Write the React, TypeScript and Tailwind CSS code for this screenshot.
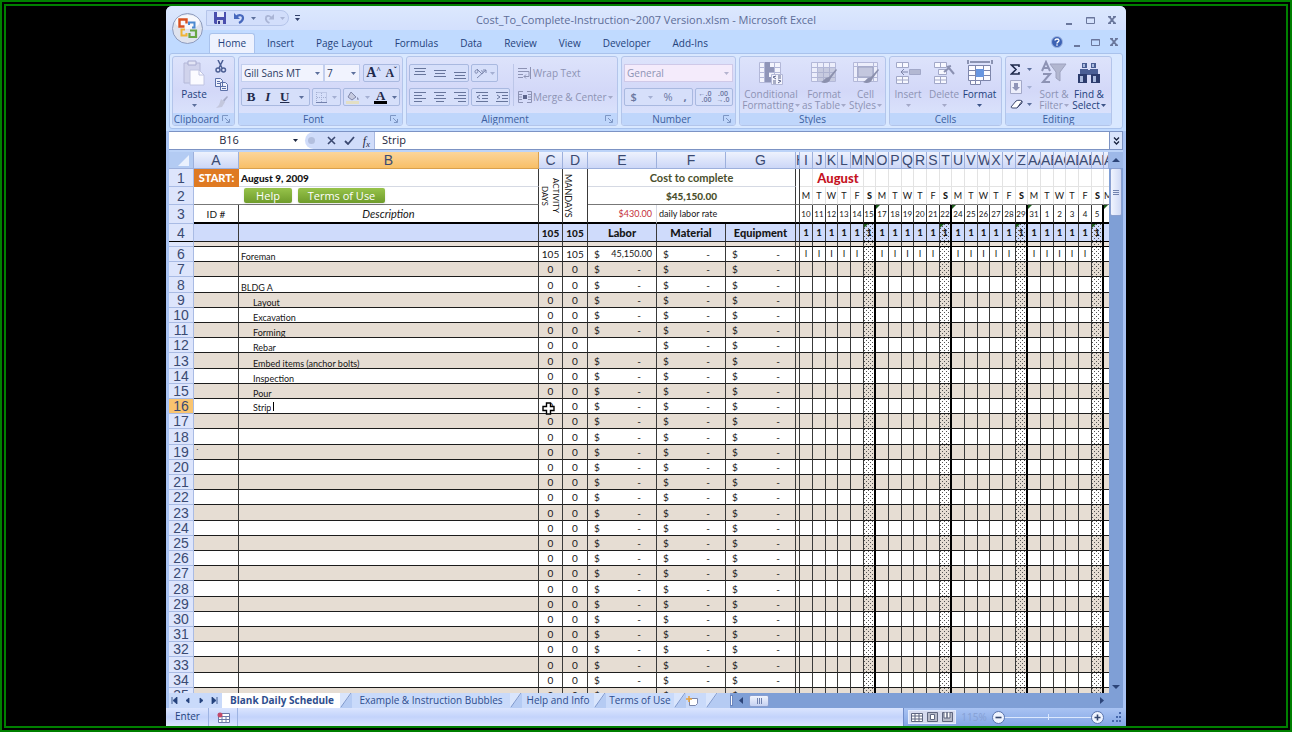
import React from "react";

interface DayColumn {
  letter: string;
  day: string;
  date: string;
  width: string;
}

interface Activity {
  row: number;
  name: string;
  indent?: boolean;
}

const dayColumns: DayColumn[] = [
  { letter: "I", day: "M", date: "10", width: "w-[13px]" },
  { letter: "J", day: "T", date: "11", width: "w-[13px]" },
  { letter: "K", day: "W", date: "12", width: "w-[12px]" },
  { letter: "L", day: "T", date: "13", width: "w-[13px]" },
  { letter: "M", day: "F", date: "14", width: "w-[13px]" },
  { letter: "N", day: "S", date: "15", width: "w-[12px]" },
  { letter: "O", day: "M", date: "17", width: "w-[13px]" },
  { letter: "P", day: "T", date: "18", width: "w-[13px]" },
  { letter: "Q", day: "W", date: "19", width: "w-[12px]" },
  { letter: "R", day: "T", date: "20", width: "w-[13px]" },
  { letter: "S", day: "F", date: "21", width: "w-[13px]" },
  { letter: "T", day: "S", date: "22", width: "w-[12px]" },
  { letter: "U", day: "M", date: "24", width: "w-[13px]" },
  { letter: "V", day: "T", date: "25", width: "w-[13px]" },
  { letter: "W", day: "W", date: "26", width: "w-[12px]" },
  { letter: "X", day: "T", date: "27", width: "w-[13px]" },
  { letter: "Y", day: "F", date: "28", width: "w-[13px]" },
  { letter: "Z", day: "S", date: "29", width: "w-[12px]" },
  { letter: "AA", day: "M", date: "31", width: "w-[13px]" },
  { letter: "AB", day: "T", date: "1", width: "w-[13px]" },
  { letter: "AC", day: "W", date: "2", width: "w-[12px]" },
  { letter: "AD", day: "T", date: "3", width: "w-[13px]" },
  { letter: "AE", day: "F", date: "4", width: "w-[13px]" },
  { letter: "AF", day: "S", date: "5", width: "w-[12px]" },
];

const activities: Activity[] = [
  { row: 6, name: "Foreman" },
  { row: 8, name: "BLDG A" },
  { row: 9, name: "Layout", indent: true },
  { row: 10, name: "Excavation", indent: true },
  { row: 11, name: "Forming", indent: true },
  { row: 12, name: "Rebar", indent: true },
  { row: 13, name: "Embed items (anchor bolts)", indent: true },
  { row: 14, name: "Inspection", indent: true },
  { row: 15, name: "Pour", indent: true },
  { row: 16, name: "Strip", indent: true },
];

const rows = Array.from({ length: 30 }, (_, i) => i + 6);

const dots =
  "bg-[conic-gradient(at_1px_1px,transparent_75%,#555_0),conic-gradient(at_1px_1px,transparent_75%,#555_0)] bg-[length:4px_4px] bg-[position:0_0,2px_2px]";

const Arrow = ({ className = "text-[#5c6f9c]" }: { className?: string }) => (
  <svg width="5" height="3" viewBox="0 0 5 3" className={`shrink-0 ${className}`}>
    <path d="M0 0h5L2.5 3z" fill="currentColor" />
  </svg>
);

const Launcher = ({ label }: { label: string }) => (
  <button aria-label={label} className="absolute right-1 top-[2px]">
    <svg width="8" height="8" viewBox="0 0 8 8" fill="none" stroke="#7d96c4">
      <path d="M.5 6V.5H6M3 3l4 4M7.5 4v3.5H4" />
    </svg>
  </button>
);

const Group = ({
  title,
  width,
  launcher,
  children,
}: {
  title: string;
  width: string;
  launcher?: boolean;
  children: React.ReactNode;
}) => (
  <section
    className={`flex shrink-0 flex-col overflow-hidden rounded-[3px] border border-[#b3c5ea] bg-linear-to-b from-[#dde3fb] via-[#d3d8f8] to-[#dde6fd] ${width}`}
  >
    <div className="flex-1">{children}</div>
    <div
      className={`relative h-3 bg-[#bfd6fb] text-center text-[10px] leading-3 text-[#3d5f9f] ${
        launcher ? "pr-[14px]" : ""
      }`}
    >
      {title}
      {launcher && <Launcher label={`${title} options`} />}
    </div>
  </section>
);

const Box = ({ className = "", children }: { className?: string; children: React.ReactNode }) => (
  <div
    className={`flex h-[18px] items-center justify-around rounded-[2px] border border-[#a9b9e0] bg-[#d6dffa] ${className}`}
  >
    {children}
  </div>
);

const Lines = ({ label, d }: { label: string; d: string }) => (
  <button aria-label={label} className="px-1">
    <svg width="12" height="12" viewBox="0 0 12 12" stroke="#67759b" fill="none">
      <path d={d} />
    </svg>
  </button>
);

const BigButton = ({
  lines,
  width,
  muted,
  children,
}: {
  lines: string[];
  width: string;
  muted?: boolean;
  children: React.ReactNode;
}) => (
  <button
    className={`flex flex-col items-center text-[10px] leading-[11px] whitespace-nowrap ${width} ${
      muted ? "text-[#8d93b4]" : "text-[#23417c]"
    }`}
  >
    <span className="mb-[3px] flex h-[26px] items-center">{children}</span>
    <span>{lines[0]}</span>
    <span className="flex h-[11px] items-center gap-px">
      {lines[1]}
      <Arrow className={muted ? "text-[#a4a9c8]" : "text-[#3c5488]"} />
    </span>
  </button>
);

const Brush = () => (
  <path d="M26 9l-7 8-3 1c-2 1-2 3-5 4 3 2 8 1 9-2l1-2 6-8z" fill="#8b90ad" stroke="none" />
);

const WindowControls = () => (
  <>
    <button aria-label="Minimize">
      <svg width="8" height="9" viewBox="0 0 8 9">
        <path d="M1 7h6v2H1z" fill="#6a779c" />
      </svg>
    </button>
    <button aria-label="Restore">
      <svg width="9" height="8" viewBox="0 0 9 8" fill="none" stroke="#6a779c">
        <path d="M.5 1.500h8v6h-8zM0 2h9" />
      </svg>
    </button>
    <button aria-label="Close">
      <svg width="8" height="8" viewBox="0 0 8 8" stroke="#6a779c" strokeWidth="1.800">
        <path d="M1 .5l6 7M7 .5l-6 7M0 .5h3M5 .5h3M0 7.500h3M5 7.500h3" />
      </svg>
    </button>
  </>
);

const TitleBar = () => (
  <header className="relative flex h-6 items-center rounded-t-md bg-linear-to-b from-[#dce8fd] to-[#d3e0fd] text-[#5f719f]">
    <button aria-label="Office Button" className="absolute left-[6px] top-[7px] z-10 size-[31px]">
      <svg width="31" height="31" viewBox="0 0 31 31" fill="none">
        <circle cx="15.5" cy="15.5" r="15" fill="#dfe3ee" stroke="#8d9bbd" />
        <ellipse cx="15.5" cy="9" rx="12" ry="7" fill="#f7f8fc" />
        <path d="M12.500 13.500H7.500v-7h7v4" stroke="#d9501f" strokeWidth="2.400" />
        <path d="M17 12V9.500h5.500v5H20" stroke="#4c8ad0" strokeWidth="2" />
        <path d="M13 16.500H9.500v6h5V20" stroke="#f0b433" strokeWidth="2" />
        <path d="M18 17.500h6v6.500h-6.500v-4" stroke="#69a744" strokeWidth="2.200" />
      </svg>
    </button>
    <div className="ml-10 flex h-4 w-[83px] items-center gap-2 rounded-r-full border border-[#b5c5ea] bg-[#d2defb] pl-[7px]">
      <button aria-label="Save">
        <svg width="12" height="12" viewBox="0 0 12 12">
          <path d="M0 0h12v12H1l-1-1z" fill="#4a4fae" />
          <path d="M3 0h7v5H3z" fill="#e7ebfa" />
          <path d="M3 8h6v4H3z" fill="#d3d8ef" />
          <path d="M4 9h2v3H4z" fill="#353a86" />
        </svg>
      </button>
      <button aria-label="Undo" className="flex items-center gap-[6px]">
        <svg width="11" height="12" viewBox="0 0 11 12" fill="none">
          <path d="M2 5C5 2 9 3 9 6S7 10 5 11" stroke="#4768bd" strokeWidth="2.200" />
          <path d="M0 1v6h6z" fill="#4768bd" />
        </svg>
        <Arrow />
      </button>
      <button aria-label="Redo" className="flex items-center gap-[6px]">
        <svg width="10" height="11" viewBox="0 0 11 12" fill="none">
          <path d="M8 5C5 2 2 3 2 6s2 4 4 5" stroke="#aab5d6" strokeWidth="2" />
          <path d="M11 1v6H5z" fill="#aab5d6" />
        </svg>
        <Arrow className="text-[#aab5d6]" />
      </button>
    </div>
    <button aria-label="Customize Quick Access Toolbar" className="ml-[6px]">
      <svg width="5" height="6" viewBox="0 0 5 6">
        <path d="M0 0h5v1H0zM0 3h5L2.500 6z" fill="#33426b" />
      </svg>
    </button>
    <h1 className="pointer-events-none absolute inset-x-0 pt-1 text-center text-[11px] leading-6 text-[#5d6d98]">
      Cost_To_Complete-Instruction~2007 Version.xlsm - Microsoft Excel
    </h1>
    <div className="mr-[10px] ml-auto flex items-center gap-[13px] pt-1">
      <WindowControls />
    </div>
  </header>
);

const RibbonTabs = () => (
  <nav className="flex h-[23px] items-end bg-[#c0daff] pl-[43px] text-[10px] text-[#24427c]">
    <a
      href="#home"
      className="flex h-5 w-[46px] items-center justify-center rounded-t-[3px] border border-b-0 border-[#a9c2ec] bg-[#eef2fe]"
    >
      Home
    </a>
    <div className="flex h-5 flex-1 items-center gap-[22px] pl-3">
      <a href="#insert">Insert</a>
      <a href="#page-layout">Page Layout</a>
      <a href="#formulas">Formulas</a>
      <a href="#data">Data</a>
      <a href="#review">Review</a>
      <a href="#view">View</a>
      <a href="#developer">Developer</a>
      <a href="#add-ins">Add-Ins</a>
    </div>
    <div className="mr-2 flex h-[22px] items-center gap-[10px]">
      <button aria-label="Help">
        <svg width="12" height="12" viewBox="0 0 12 12" fill="none">
          <circle cx="6" cy="6" r="5.500" fill="#3c62b4" stroke="#9fb6e2" />
          <path d="M4 4.500C4 2.500 8 2.500 8 4.500 8 6 6 5.800 6 7.500M6 8.300v1.400" stroke="#fff" strokeWidth="1.300" />
        </svg>
      </button>
      <WindowControls />
    </div>
  </nav>
);

const ClipboardGroup = () => (
  <Group title="Clipboard" width="w-[63px]" launcher>
    <div className="flex pl-1 pt-[3px]">
      <button className="flex w-[34px] flex-col items-center text-[10px] leading-[11px] text-[#23417c]">
        <svg width="24" height="26" viewBox="0 0 24 26" className="mb-[3px]">
          <path d="M2 3h16v20H2z" fill="#d0d3ec" stroke="#b4b8d8" />
          <path d="M6 1h8v4H6z" fill="#e3e5f5" stroke="#a8acd0" />
          <path d="M8 10h9l5 5v10H8z" fill="#fbfbff" stroke="#c0c4e2" />
          <path d="M17 10v5h5" fill="none" stroke="#c0c4e2" />
        </svg>
        Paste
        <span className="flex h-[11px] items-center">
          <Arrow />
        </span>
      </button>
      <div className="ml-1 flex flex-col gap-[5px]">
        <button aria-label="Cut">
          <svg width="12" height="13" viewBox="0 0 12 13" fill="none" stroke="#4c5f94" strokeWidth="1.500">
            <path d="M3 0l4 8M8 0L4 8" />
            <circle cx="3" cy="10" r="2" />
            <circle cx="8.500" cy="10" r="2" />
          </svg>
        </button>
        <button aria-label="Copy">
          <svg width="14" height="13" viewBox="0 0 14 13" fill="#eef1fc" stroke="#5b70a8">
            <path d="M.5.5h5l2 2v6h-7zM5.500 4.500h5l2 2v6h-7z" />
            <path d="M2 3.500h3M2 5.500h3M7 8.500h4M7 10.500h4" />
          </svg>
        </button>
        <button aria-label="Format Painter">
          <svg width="13" height="12" viewBox="0 0 13 12">
            <path d="M12 0l-4 4 1 2 4-5z" fill="#a7acc9" />
            <path d="M6 3l4 3-3 5-6 1 3-3z" fill="#c3c7dd" />
          </svg>
        </button>
      </div>
    </div>
  </Group>
);

const FontGroup = () => (
  <Group title="Font" width="w-[165px]" launcher>
    <div className="flex flex-col gap-[6px] px-[2px] pt-[7px]">
      <div className="flex">
        <div className="relative w-[83px]">
          <select
            aria-label="Font name"
            defaultValue="Gill Sans MT"
            className="block h-[18px] w-full appearance-none border border-[#c3cfee] bg-[#f1f3fe] pl-[2px] text-[10px] leading-4 text-[#2d3c62]"
          >
            <option>Gill Sans MT</option>
          </select>
          <Arrow className="absolute right-1 top-2 text-[#5c6f9c]" />
        </div>
        <div className="relative w-[36px]">
          <select
            aria-label="Font size"
            defaultValue="7"
            className="block h-[18px] w-full appearance-none border border-[#c3cfee] bg-[#f1f3fe] pl-[2px] text-[10px] leading-4 text-[#2d3c62]"
          >
            <option>7</option>
          </select>
          <Arrow className="absolute right-1 top-2 text-[#5c6f9c]" />
        </div>
        <Box className="ml-[3px] flex-1">
          <button aria-label="Grow Font" className="font-['Liberation_Serif',serif] text-sm leading-4 font-bold text-[#1f2a4c]">
            A<sup className="text-[8px]">^</sup>
          </button>
          <button aria-label="Shrink Font" className="font-['Liberation_Serif',serif] text-xs leading-4 font-bold text-[#1f2a4c]">
            A<sup className="text-[8px]">ˇ</sup>
          </button>
        </Box>
      </div>
      <div className="flex gap-[2px] font-['Liberation_Serif',serif] text-[13px] font-bold text-[#1f2a4c]">
        <Box className="w-[69px]">
          <button>B</button>
          <button className="italic">I</button>
          <button className="underline">U</button>
          <Arrow />
        </Box>
        <Box className="w-[29px]">
          <button aria-label="Borders">
            <svg width="11" height="11" viewBox="0 0 11 11" fill="none" stroke="#a4afd2">
              <path d="M.5.5h10v10M.5 0v10M5.500 1v9M1 5.500h9" strokeDasharray="1 1" />
              <path d="M0 10.500h11" stroke="#7482ad" />
            </svg>
          </button>
          <Arrow className="text-[#a4afd2]" />
        </Box>
        <Box className="flex-1">
          <button aria-label="Fill Color">
            <svg width="14" height="13" viewBox="0 0 14 13">
              <path d="M5 1l5 5-4 3-4-3z" fill="#c6cadf" stroke="#8087a8" />
              <path d="M11 6c2 1 2 3 1 3s-1-2-1-3z" fill="#8087a8" />
              <path d="M0 10h13v3H0z" fill="#e3dfc4" />
            </svg>
          </button>
          <Arrow className="text-[#a4afd2]" />
          <button aria-label="Font Color" className="h-[14px] border-b-[3px] border-black px-[2px] leading-[11px]">
            A
          </button>
          <Arrow />
        </Box>
      </div>
    </div>
  </Group>
);

const AlignmentGroup = () => (
  <Group title="Alignment" width="w-[212px]" launcher>
    <div className="flex pl-[2px] pt-[7px]">
      <div className="flex flex-col gap-[6px]">
        <div className="flex gap-[2px]">
          <Box className="w-[60px]">
            <Lines label="Top Align" d="M0 1.500h12M1 4.500h10M0 7.500h12" />
            <Lines label="Middle Align" d="M0 3.500h12M1 6.500h10M0 9.500h12" />
            <Lines label="Bottom Align" d="M0 5.500h12M1 8.500h10M0 11.500h12" />
          </Box>
          <Box className="w-[27px]">
            <button aria-label="Orientation">
              <svg width="13" height="12" viewBox="0 0 13 12" fill="none" stroke="#7d88ae">
                <path d="M3 11l9-8M9 3h3v3M1 4c2-3 4 1 2 2S1 5 1 4zM3 2l5 5c2-1 1-4-1-3" />
              </svg>
            </button>
            <Arrow className="text-[#a4afd2]" />
          </Box>
        </div>
        <div className="flex gap-[2px]">
          <Box className="w-[60px]">
            <Lines label="Align Left" d="M0 1.500h12M0 4.500h8M0 7.500h12M0 10.500h8" />
            <Lines label="Center" d="M0 1.500h12M2 4.500h8M0 7.500h12M2 10.500h8" />
            <Lines label="Align Right" d="M0 1.500h12M4 4.500h8M0 7.500h12M4 10.500h8" />
          </Box>
          <Box className="w-[39px]">
            <Lines label="Decrease Indent" d="M0 1.500h12M6 4.500h6M6 7.500h6M0 10.500h12M4 4L1 6l3 2" />
            <Lines label="Increase Indent" d="M0 1.500h12M6 4.500h6M6 7.500h6M0 10.500h12M1 4l3 2-3 2" />
          </Box>
        </div>
      </div>
      <div className="ml-[3px] flex flex-col gap-[6px] border-l border-[#bcc6e8] pl-1 text-[10px] text-[#8d93b4]">
        <button className="flex h-[18px] items-center gap-px">
          <svg width="14" height="13" viewBox="0 0 14 13" fill="none" stroke="#8d93b4">
            <path d="M0 1.500h9M0 4.500h11v5H6M0 7.500h5M0 10.500h5M8 7.500l-2 2 2 2M12.500 0v12" />
          </svg>
          Wrap Text
        </button>
        <button className="flex h-[18px] items-center gap-px whitespace-nowrap">
          <svg width="14" height="12" viewBox="0 0 14 12" fill="none" stroke="#8d93b4">
            <path d="M5 .5H.5v11H5M9 .5h4.500v11H9M0 3.500h4M0 8.500h4M10 3.500h4M10 8.500h4M1 6h3M10 6h3" />
            <path d="M5 4h4v4H5z" fill="#5c648c" stroke="none" />
          </svg>
          Merge &amp; Center
          <Arrow className="text-[#a4a9c8]" />
        </button>
      </div>
    </div>
  </Group>
);

const NumberGroup = () => (
  <Group title="Number" width="w-[115px]" launcher>
    <div className="flex flex-col gap-[6px] px-[2px] pt-[7px]">
      <div className="relative">
        <select
          aria-label="Number format"
          defaultValue="General"
          className="block h-[18px] w-full appearance-none border border-[#cfc9e8] bg-[#f4ebfb] pl-[2px] text-[10px] leading-4 text-[#8d93b4]"
        >
          <option>General</option>
        </select>
        <Arrow className="absolute right-1 top-2 text-[#b4b3cf]" />
      </div>
      <div className="flex gap-[2px] text-[11px] text-[#6b779f]">
        <Box className="flex-1">
          <button className="font-semibold">$</button>
          <Arrow className="text-[#a4afd2]" />
          <button>%</button>
          <button className="font-bold">,</button>
        </Box>
        <Box className="w-[38px] text-[7px] leading-[6px] font-semibold">
          <button className="text-right">
            ←.0
            <br />
            .00
          </button>
          <button>
            .00
            <br />
            →.0
          </button>
        </Box>
      </div>
    </div>
  </Group>
);

const StylesGroup = () => (
  <Group title="Styles" width="w-[147px]">
    <div className="flex pl-[2px] pt-[3px]">
      <BigButton lines={["Conditional", "Formatting"]} width="w-[58px]" muted>
        <svg width="26" height="26" viewBox="0 0 26 26" fill="#f3f4fd" stroke="#b3b8d8">
          <path d="M1.500 2.500h21v20h-21zM1 7.500h21M1 12.500h21M1 17.500h21M6.500 2v20M16.500 2v20" />
          <path d="M7 2h5v5H7zM7 7h9v5H7zM7 12h4v5H7zM7 17h7v5H7z" fill="#8f95b8" stroke="none" />
          <path d="M13.500 14.500h11v10h-11z" />
          <path d="M18 16l-3 1 3 2M15 21h3M15 23h3M20 16h3M20 18h3M20 20l3 1-3 2" stroke="#5f678e" fill="none" />
        </svg>
      </BigButton>
      <BigButton lines={["Format", "as Table"]} width="w-[48px]" muted>
        <svg width="28" height="26" viewBox="0 0 28 26" fill="#eceefb" stroke="#b3b8d8">
          <path d="M1.500 2.500h24v19h-24zM1 7.500h24M1 12.500h24M1 17.500h24M7.500 2v19M13.500 2v19M19.500 2v19" />
          <path d="M8 8h17v13H8z" fill="#a9aecb" fillOpacity=".55" stroke="none" />
          <Brush />
        </svg>
      </BigButton>
      <BigButton lines={["Cell", "Styles"]} width="w-[35px]" muted>
        <svg width="28" height="26" viewBox="0 0 28 26" fill="#eceefb" stroke="#b3b8d8">
          <path d="M1.500 2.500h24v19h-24zM1 6.500h24M1 17.500h24M5.500 2v19M21.500 2v19" />
          <path d="M6 7h15v10H6z" fill="#c3c7de" stroke="#9ba1c0" />
          <Brush />
        </svg>
      </BigButton>
    </div>
  </Group>
);

const CellsGroup = () => (
  <Group title="Cells" width="w-[113px]">
    <div className="flex pt-[3px]">
      <BigButton lines={["Insert", ""]} width="w-9" muted>
        <svg width="26" height="24" viewBox="0 0 26 24" fill="#f7f8ff" stroke="#a2a8c8">
          <path d="M1.500 1.500h12v5h-12zM7.500 1v5M1.500 15.500h12v7h-12zM7.500 15v7M1 19h12" />
          <path d="M14.500 8.500h11v5h-11z" fill="#b3b8d2" />
          <path d="M13 11H6M9 8l-3 3 3 3" fill="none" stroke="#7d84a8" />
        </svg>
      </BigButton>
      <BigButton lines={["Delete", ""]} width="w-9" muted>
        <svg width="22" height="24" viewBox="0 0 22 24" fill="#f7f8ff" stroke="#a2a8c8">
          <path d="M1.500 1.500h12v5h-12zM7.500 1v5M1.500 15.500h12v7h-12zM7.500 15v7M1 19h12M5.500 8.500h8v5h-8z" />
          <path d="M11 11l5-4 5 6M14 6l4-1" fill="none" stroke="#8b91b2" strokeWidth="2" />
        </svg>
      </BigButton>
      <BigButton lines={["Format", ""]} width="w-[35px]">
        <svg width="26" height="26" viewBox="0 0 26 26" fill="#fbfbff" stroke="#7e86ab">
          <path d="M1 0v4M25 0v4M3 2h20" stroke="#3a4468" fill="none" />
          <path d="M1.500 5.500h22v15h-22zM1 10.500h23M1 15.500h23M8.500 5v16M16.500 5v16" />
          <path d="M9 9h8v8H9z" fill="#6795e0" stroke="none" />
          <path d="M3.500 20.500h5v4h-5zM8.500 20.500h5v4h-5z" />
        </svg>
      </BigButton>
    </div>
  </Group>
);

const EditingGroup = () => (
  <Group title="Editing" width="w-[107px]">
    <div className="flex pl-1 pt-[3px]">
      <div className="mr-[5px] flex w-[22px] flex-col gap-[5px]">
        <button aria-label="Sum" className="flex items-center justify-between pt-1">
          <svg width="10" height="11" viewBox="0 0 10 11" fill="none" stroke="#1f2a4c" strokeWidth="1.600">
            <path d="M9 3V1H1.500L6 5.500 1.500 10H9V8" />
          </svg>
          <Arrow />
        </button>
        <button aria-label="Fill" className="flex items-center justify-between">
          <svg width="12" height="14" viewBox="0 0 12 14" fill="#eceefb" stroke="#a2a8c8">
            <path d="M.5.5h11v13H.5z" />
            <path d="M4 3h4v4h2l-4 4-4-4h2z" fill="#8f95b8" stroke="none" />
          </svg>
          <Arrow className="text-[#a4afd2]" />
        </button>
        <button aria-label="Clear" className="flex items-center justify-between">
          <svg width="13" height="11" viewBox="0 0 13 11" fill="#fff" stroke="#3f4a70">
            <path d="M1 8l5-6c1-1 5-1 6 0L7 9H3C1 9 1 8 1 8zM7 9l5-5V2" />
          </svg>
          <Arrow />
        </button>
      </div>
      <BigButton lines={["Sort &", "Filter"]} width="w-[34px]" muted>
        <svg width="26" height="26" viewBox="0 0 26 26" fill="none" stroke="#8d93b4" strokeWidth="2">
          <path d="M1 11L5 2l4 9M3 8h5M2 14h7l-7 8h7" />
          <path d="M9 4h16l-6 8v9l-4-3v-6z" fill="#b2b7d0" stroke="#9da2bf" strokeWidth="1" />
        </svg>
      </BigButton>
      <BigButton lines={["Find &", "Select"]} width="w-[36px]">
        <svg width="24" height="22" viewBox="0 0 24 22">
          <path d="M5 1h5v5H5zM14 1h5v5h-5zM3 7h8v6H3zM13 7h8v6h-8zM10 8h4v5h-4z" fill="#4a5f95" />
          <path d="M1 12h9v9H1zM14 12h9v9h-9z" fill="#2c3c6d" />
          <path d="M3 14h3v6H3zM16 14h3v6h-3zM6 2h2v3H6zM15 2h2v3h-2z" fill="#a9bade" />
        </svg>
      </BigButton>
    </div>
  </Group>
);

const Ribbon = () => (
  <div className="flex h-[76px] gap-[3px] overflow-hidden rounded-[3px] border border-[#a9c2ec] bg-[#d9e8ff] p-[2px]">
    <ClipboardGroup />
    <FontGroup />
    <AlignmentGroup />
    <NumberGroup />
    <StylesGroup />
    <CellsGroup />
    <EditingGroup />
  </div>
);

const FormulaBar = () => (
  <div className="mb-[2px] flex h-[19px] border-y border-[#7c93c4] bg-white text-[11px] text-[#1d2740]">
    <input
      aria-label="Name Box"
      defaultValue="B16"
      className="w-[120px] bg-transparent text-center outline-none"
    />
    <button aria-label="Name list" className="w-4 pl-1">
      <Arrow className="text-[#1d2740]" />
    </button>
    <div className="flex w-[70px] items-center justify-end gap-2 rounded-l-full border-r border-[#a9b9e0] bg-[#d0dcfa] pr-1">
      <span className="mr-auto ml-[3px] size-[7px] rounded-full bg-[#b3bfde]" />
      <button aria-label="Cancel">
        <svg width="9" height="9" viewBox="0 0 9 9" stroke="#3a4870" strokeWidth="1.600">
          <path d="M1 1l7 7M8 1L1 8" />
        </svg>
      </button>
      <button aria-label="Enter">
        <svg width="11" height="9" viewBox="0 0 11 9" fill="none" stroke="#3a4870" strokeWidth="1.800">
          <path d="M1 5l3 3 6-7" />
        </svg>
      </button>
      <button className="font-['Liberation_Serif',serif] text-xs leading-4 italic">
        f<sub className="text-[9px]">x</sub>
      </button>
    </div>
    <input aria-label="Formula Bar" defaultValue="Strip" className="min-w-0 flex-1 px-[7px] outline-none" />
    <button
      aria-label="Expand Formula Bar"
      className="flex w-[14px] items-center justify-center border-x border-[#7c93c4] bg-[#d9e4fc]"
    >
      <svg width="7" height="8" viewBox="0 0 7 8" fill="none" stroke="#16203c" strokeWidth="1.300">
        <path d="M1 .5L3.500 3 6 .5M1 4.500L3.500 7 6 4.500" />
      </svg>
    </button>
  </div>
);

const Flag = () => (
  <svg width="4" height="4" viewBox="0 0 4 4" className="absolute left-0 top-0">
    <path d="M0 0h4L0 4z" fill="#1d5c1d" />
  </svg>
);

const headCell =
  "border-r border-b border-[#9db0dc] bg-linear-to-b from-[#eef2fd] to-[#ccd7f7] font-normal overflow-hidden";
const rowHead =
  "border-r border-b border-[#a9bbe4] bg-[#dde5fc] font-['Liberation_Sans',sans-serif] text-[14px] font-normal text-[#3a4a72]";
const cell = "border-r border-b border-r-[#3a3a3a] border-b-[#1c1c1c]";
const thickCell = "border-r border-b-2 border-r-[#3a3a3a] border-b-black";

const dayBorder = (day: string) => (day === "S" ? "border-r-2 border-r-black" : "border-r border-r-[#3a3a3a]");

const Money = ({ value = "-" }: { value?: string }) => (
  <div className={`flex justify-between pl-[6px] ${value === "-" ? "pr-[15px]" : "pr-1 text-[9px]"}`}>
    <span className="text-[10px]">$</span>
    <span>{value}</span>
  </div>
);

const Sheet = () => (
  <table className="w-full table-fixed border-separate border-spacing-0 bg-white font-['Lato',sans-serif] text-[10px] leading-[14px] whitespace-nowrap text-[#161616] [&_td]:p-0 [&_th]:p-0">
    <colgroup>
      <col className="w-[25px]" />
      <col className="w-[45px]" />
      <col />
      <col className="w-[24px]" />
      <col className="w-[25px]" />
      <col className="w-[69px]" />
      <col className="w-[69px]" />
      <col className="w-[70px]" />
      <col className="w-[4px]" />
      {dayColumns.map((col) => (
        <col key={col.letter} className={col.width} />
      ))}
      <col className="w-[5px]" />
    </colgroup>
    <thead>
      <tr className="h-[17px] font-['Liberation_Sans',sans-serif] text-[14px] leading-4 text-[#3a4a72]">
        <th className="border-r border-b border-[#9db0dc] bg-[#b3cbf3]">
          <svg width="11" height="11" viewBox="0 0 11 11" className="mr-1 ml-auto">
            <path d="M11 0v11H0z" fill="#eaf1fe" />
          </svg>
        </th>
        <th className={headCell}>A</th>
        <th className="border-r border-b border-[#d9a04d] bg-linear-to-b from-[#fbd59a] to-[#f8bf66] font-normal">B</th>
        {["C", "D", "E", "F", "G"].map((letter) => (
          <th key={letter} className={headCell}>
            {letter}
          </th>
        ))}
        <th className={headCell}>H</th>
        {dayColumns.map((col) => (
          <th key={col.letter} className={`${headCell} ${col.letter.length > 1 ? "text-left" : ""}`}>
            {col.letter}
          </th>
        ))}
        <th className={`${headCell} text-left`}>A</th>
      </tr>
    </thead>
    <tbody>
      <tr className="h-[18px]">
        <th className={rowHead}>1</th>
        <td className="bg-[#df7a22] text-center text-[11px] font-black text-white">START:</td>
        <td className="border-r border-b border-r-[#3a3a3a] border-b-[#d5d9e3] pl-[2px]! font-black">August 9, 2009</td>
        <td rowSpan={3} className={thickCell}>
          <div className="mx-auto h-[42px] w-[22px] text-center text-[8px] leading-[11px] [writing-mode:vertical-rl]">
            ACTIVITY
            <br />
            DAYS
          </div>
        </td>
        <td rowSpan={3} className={thickCell}>
          <div className="mx-auto h-[46px] w-[11px] text-center text-[9px] leading-[11px] [writing-mode:vertical-rl]">
            MANDAYS
          </div>
        </td>
        <td
          colSpan={3}
          className="border-r border-b border-r-[#3a3a3a] border-b-[#d5d9e3] text-center text-[11px] font-bold text-[#4b4f2c]"
        >
          Cost to complete
        </td>
        <td className="border-r border-r-[#3a3a3a]" />
        <td className="border-r border-b border-[#e3e3e3]" />
        <td colSpan={4} className="border-r border-b border-[#e3e3e3] text-center text-[13px] font-black text-[#c5121f]">
          August
        </td>
        {dayColumns.slice(5).map((col) => (
          <td key={col.letter} className="border-r border-b border-[#e3e3e3]" />
        ))}
        <td className="border-b border-[#e3e3e3]" />
      </tr>
      <tr className="h-[18px]">
        <th className={rowHead}>2</th>
        <td className="border-b border-[#777]" />
        <td className="border-r border-b border-r-[#3a3a3a] border-b-[#777]">
          <div className="flex gap-[6px] pl-[5px] font-['Open_Sans',sans-serif] text-[11px] leading-[15px] text-white">
            <button className="w-12 rounded-[2px] bg-linear-to-b from-[#97c34a] to-[#6f9c2b] shadow-sm">Help</button>
            <button className="w-[87px] rounded-[2px] bg-linear-to-b from-[#97c34a] to-[#6f9c2b] shadow-sm">
              Terms of Use
            </button>
          </div>
        </td>
        <td
          colSpan={3}
          className="border-r border-b border-r-[#3a3a3a] border-b-[#777] text-center text-[10px] font-black text-[#4b4f2c]"
        >
          $45,150.00
        </td>
        <td className="border-r border-b border-r-[#3a3a3a] border-b-[#777]" />
        {dayColumns.map((col) => (
          <td
            key={col.letter}
            className={`border-r border-b border-r-[#e3e3e3] border-b-[#777] text-center text-[9px] ${
              col.day === "S" ? "font-black" : ""
            }`}
          >
            {col.day}
          </td>
        ))}
        <td className="overflow-hidden border-b border-[#777] text-[9px]">M</td>
      </tr>
      <tr className="h-[19px]">
        <th className={rowHead}>3</th>
        <td className={`${thickCell} text-center`}>ID #</td>
        <td className={`${thickCell} text-center text-[11px] italic`}>Description</td>
        <td className="border-r border-b-2 border-r-[#d5d9e3] border-b-black pr-1! text-right text-[9px] text-[#c5303a]">
          $430.00
        </td>
        <td colSpan={2} className={`${thickCell} pl-[2px]! text-[9px]`}>
          daily labor rate
        </td>
        <td className={thickCell} />
        {dayColumns.map((col) => (
          <td key={col.letter} className={`relative border-b-2 border-b-black text-center text-[8px] ${dayBorder(col.day)}`}>
            {col.day === "M" && col.date !== "10" && <Flag />}
            {col.date}
          </td>
        ))}
        <td className="relative border-b-2 border-black">
          <Flag />
        </td>
      </tr>
      <tr className="h-[18px] bg-[#cfdbfb] font-black">
        <th className={`${rowHead} border-b-black!`}>4</th>
        <td className={cell} />
        <td className={cell} />
        <td className={`${cell} text-center`}>105</td>
        <td className={`${cell} text-center`}>105</td>
        <td className={`${cell} text-center text-[11px]`}>Labor</td>
        <td className={`${cell} text-center text-[11px]`}>Material</td>
        <td className={`${cell} text-center text-[11px]`}>Equipment</td>
        <td className={cell} />
        {dayColumns.map((col) => (
          <td
            key={col.letter}
            className={`relative border-b border-b-black text-center text-[9px] ${dayBorder(col.day)} ${
              col.day === "S" ? dots : ""
            }`}
          >
            {col.day === "S" && <Flag />}1
          </td>
        ))}
        <td className="border-b border-black" />
      </tr>
      <tr className="h-[5px] bg-[#e9e0d7]">
        <td className="border-r border-b border-[#a9bbe4] bg-[#dde5fc]" />
        {Array.from({ length: 8 }, (_, i) => (
          <td key={i} className={cell} />
        ))}
        {dayColumns.map((col) => (
          <td key={col.letter} className={`border-b border-b-black ${dayBorder(col.day)} ${col.day === "S" ? dots : ""}`} />
        ))}
        <td className="border-b border-black" />
      </tr>
      {rows.map((row) => {
        const activity = activities.find((item) => item.row === row);
        const count = row === 6 ? "105" : "0";
        const editing = row === 16;
        return (
          <tr
            key={row}
            className={`${row % 5 === 3 ? "h-[16px]" : "h-[15px]"} ${row % 2 ? "bg-[#e6ddd3]" : "bg-white"}`}
          >
            <th className={`${rowHead} ${editing ? "bg-[#f9c46f]!" : ""}`}>{row}</th>
            <td className={cell}>{row === 19 && <span className="block pl-[2px] text-[8px] leading-3">`</span>}</td>
            <td className={`${cell} align-bottom text-[9px] leading-[9px] ${activity?.indent ? "pl-[14px]!" : "pl-[2px]!"}`}>
              {editing ? (
                <div className="flex gap-[2px]">
                  <input
                    aria-label="Cell B16"
                    defaultValue={activity?.name}
                    className="field-sizing-content bg-transparent outline-none"
                  />
                  <span className="h-[9px] w-px bg-black" />
                </div>
              ) : (
                activity?.name
              )}
            </td>
            <td className={`${cell} relative text-center`}>
              {count}
              {editing && (
                <svg width="13" height="13" viewBox="0 0 13 13" className="absolute left-[3px] top-[3px]">
                  <path
                    d="M4.500 1h4v3.500H12v4H8.500V12h-4V8.500H1v-4h3.500z"
                    fill="#fff"
                    stroke="#000"
                    strokeWidth="1.400"
                  />
                </svg>
              )}
            </td>
            <td className={`${cell} text-center`}>{count}</td>
            <td className={cell}>{row !== 12 && <Money value={row === 6 ? "45,150.00" : "-"} />}</td>
            <td className={cell}>
              <Money />
            </td>
            <td className={cell}>
              <Money />
            </td>
            <td className={cell} />
            {dayColumns.map((col) => (
              <td
                key={col.letter}
                className={`border-b border-b-[#1c1c1c] text-center text-[9px] ${dayBorder(col.day)} ${
                  col.day === "S" ? dots : ""
                }`}
              >
                {row === 6 && col.day !== "S" && "I"}
              </td>
            ))}
            <td className="border-b border-[#1c1c1c]" />
          </tr>
        );
      })}
    </tbody>
  </table>
);

const VerticalScroll = () => (
  <div className="flex w-[14px] flex-col items-center bg-[#7f9fd6]">
    <button aria-label="Scroll up" className="flex h-4 w-full items-center justify-center bg-[#9db8e8]">
      <svg width="8" height="4" viewBox="0 0 8 4">
        <path d="M4 0l4 4H0z" fill="#2c4478" />
      </svg>
    </button>
    <div className="flex h-12 w-3 flex-col items-center justify-center gap-px rounded-[2px] border border-[#8a9fd0] bg-linear-to-r from-[#f1f4fe] to-[#cfd9f5]">
      <span className="h-px w-[6px] bg-[#7182ae]" />
      <span className="h-px w-[6px] bg-[#7182ae]" />
      <span className="h-px w-[6px] bg-[#7182ae]" />
    </div>
    <button aria-label="Scroll down" className="mt-auto mb-1">
      <svg width="8" height="4" viewBox="0 0 8 4">
        <path d="M0 0h8L4 4z" fill="#2c4478" />
      </svg>
    </button>
  </div>
);

const TabEdge = () => (
  <svg width="12" height="14" viewBox="0 0 12 14" className="shrink-0">
    <path d="M12 0H0v14h1z" fill="#d9e5fc" />
    <path d="M1 14L11 0" stroke="#7f98cb" fill="none" />
  </svg>
);

const SheetTabs = () => (
  <div className="flex h-[15px] items-stretch bg-[#b5cbf3] text-[10px] leading-[13px] whitespace-nowrap text-[#2d4d8e]">
    <div className="flex w-[53px] items-center justify-around bg-[#c9dafa] pr-[2px]">
      {[
        ["First sheet", "M1 0v7M6 0v7L2 3.500z"],
        ["Previous sheet", "M5 1v5L2 3.500z"],
        ["Next sheet", "M3 1v5l3-2.500z"],
        ["Last sheet", "M2 0v7l4-3.500zM7 0v7"],
      ].map(([label, d]) => (
        <button key={label} aria-label={label}>
          <svg width="8" height="7" viewBox="0 0 8 7" fill="#23417c" stroke="#23417c" strokeWidth=".8">
            <path d={d} />
          </svg>
        </button>
      ))}
    </div>
    <button className="w-[118px] bg-white pl-2 text-left font-bold">Blank Daily Schedule</button>
    <TabEdge />
    <button className="w-[158px] bg-[#c9dafa]">Example &amp; Instruction Bubbles</button>
    <TabEdge />
    <button className="w-[72px] bg-[#c9dafa]">Help and Info</button>
    <TabEdge />
    <button className="w-[68px] bg-[#c9dafa]">Terms of Use</button>
    <TabEdge />
    <button aria-label="Insert Worksheet" className="w-5 bg-[#c9dafa]">
      <svg width="13" height="10" viewBox="0 0 13 10" fill="#fff" stroke="#7c87ab">
        <path d="M3.500 2.500h8v5l-2 2h-6z" />
        <path d="M0 3h6M3 0v6" stroke="#e8a33c" strokeWidth="1.500" />
      </svg>
    </button>
    <TabEdge />
    <div className="flex flex-1 items-center bg-[#b5cbf3]">
      <div className="ml-auto flex h-full w-[393px] items-center bg-[#7f9fd6]">
        <span className="h-[11px] w-[3px] border border-[#6b86bf] bg-white" />
        <button aria-label="Scroll left" className="ml-[6px]">
          <svg width="4" height="7" viewBox="0 0 4 7">
            <path d="M4 0v7L0 3.500z" fill="#2c4478" />
          </svg>
        </button>
        <div className="ml-[6px] flex h-3 w-5 items-center justify-center gap-px rounded-[2px] border border-[#8a9fd0] bg-linear-to-b from-[#f1f4fe] to-[#c5d1f1]">
          <span className="h-[6px] w-px bg-[#7182ae]" />
          <span className="h-[6px] w-px bg-[#7182ae]" />
          <span className="h-[6px] w-px bg-[#7182ae]" />
        </div>
        <button aria-label="Scroll right" className="mr-[19px] ml-auto">
          <svg width="4" height="7" viewBox="0 0 4 7">
            <path d="M0 0v7l4-3.500z" fill="#2c4478" />
          </svg>
        </button>
      </div>
    </div>
  </div>
);

const StatusBar = () => (
  <footer className="flex h-[18px] bg-linear-to-b from-[#dbe5fe] via-[#c3d3fb] to-[#dbe5fe] text-[10px] leading-[17px] text-[#24427c]">
    <span className="w-[43px] border-r border-[#9db3e2] pl-[9px]">Enter</span>
    <button aria-label="Record Macro" className="flex w-[29px] items-center justify-center border-r border-[#9db3e2]">
      <svg width="13" height="11" viewBox="0 0 13 11" fill="#fff" stroke="#6b7aa8">
        <path d="M1.500 1.500h11v9h-11zM1 4.500h11M5 4v6M9 4v6M1 7.500h11" />
        <circle cx="3" cy="3" r="2.500" fill="#c2496a" stroke="none" />
      </svg>
    </button>
    <div className="ml-auto flex w-[223px] items-center border-l border-[#6f8cc9] bg-linear-to-b from-[#a9c3f3] to-[#84a6e4] pl-1">
      <div className="flex h-[14px] w-12 items-center justify-around border border-[#e3ecfd] bg-[#d6dbee]">
        <button aria-label="Normal view">
          <svg width="12" height="9" viewBox="0 0 12 9" fill="#fff" stroke="#5f6780">
            <path d="M.5.500h11v8H.5zM0 3h12M0 6h12M4 0v9M8 0v9" />
          </svg>
        </button>
        <button aria-label="Page layout view">
          <svg width="11" height="10" viewBox="0 0 11 10" fill="#b6bac9" stroke="#5f6780">
            <path d="M.5.500h10v9H.5z" />
            <path d="M3.500 2.500h4v5h-4z" fill="#fff" />
          </svg>
        </button>
        <button aria-label="Page break preview">
          <svg width="11" height="10" viewBox="0 0 11 10" fill="#b6bac9" stroke="#5f6780">
            <path d="M.5.500h10v9H.5z" />
            <path d="M2 0h3v6H2zM5 0h3v6H5z" fill="#fff" />
          </svg>
        </button>
      </div>
      <span className="w-9 text-center text-[#86a0d4]">115%</span>
      <button aria-label="Zoom out">
        <svg width="13" height="13" viewBox="0 0 13 13">
          <circle cx="6.500" cy="6.500" r="6" fill="#eef3fe" stroke="#5873ac" />
          <path d="M3.500 6.500h6" stroke="#33466f" strokeWidth="1.600" />
        </svg>
      </button>
      <div className="relative flex flex-1 items-center justify-center">
        <span className="absolute inset-x-0 h-px bg-[#dce8fd]" />
        <span className="h-[6px] w-px bg-[#dce8fd]" />
      </div>
      <button aria-label="Zoom in">
        <svg width="13" height="13" viewBox="0 0 13 13">
          <circle cx="6.500" cy="6.500" r="6" fill="#eef3fe" stroke="#5873ac" />
          <path d="M3.500 6.500h6M6.500 3.500v6" stroke="#33466f" strokeWidth="1.600" />
        </svg>
      </button>
      <svg width="10" height="10" viewBox="0 0 10 10" fill="#4667ab" className="mr-1 ml-2">
        <path d="M7 0h2v2H7zM4 4h2v2H4zM7 4h2v2H7zM0 8h2v2H0zM4 8h2v2H4zM7 8h2v2H7z" />
      </svg>
    </div>
  </footer>
);

const App: React.FC = () => {
  return (
    <div className="flex h-screen justify-center border-6 border-double border-[#008000] bg-black">
      <div className="flex w-3/4 flex-col rounded-t-md bg-[#bcd3f8] font-['Open_Sans',sans-serif]">
        <TitleBar />
        <RibbonTabs />
        <div className="bg-[#c0daff] px-[3px] pb-[2px]">
          <Ribbon />
        </div>
        <main className="flex min-h-0 flex-1 flex-col border-x-3 border-[#a9c3f3]">
          <FormulaBar />
          <div className="flex min-h-0 flex-1">
            <div className="min-w-0 flex-1 overflow-hidden">
              <Sheet />
            </div>
            <VerticalScroll />
          </div>
          <SheetTabs />
        </main>
        <StatusBar />
      </div>
    </div>
  );
};

export default App;
